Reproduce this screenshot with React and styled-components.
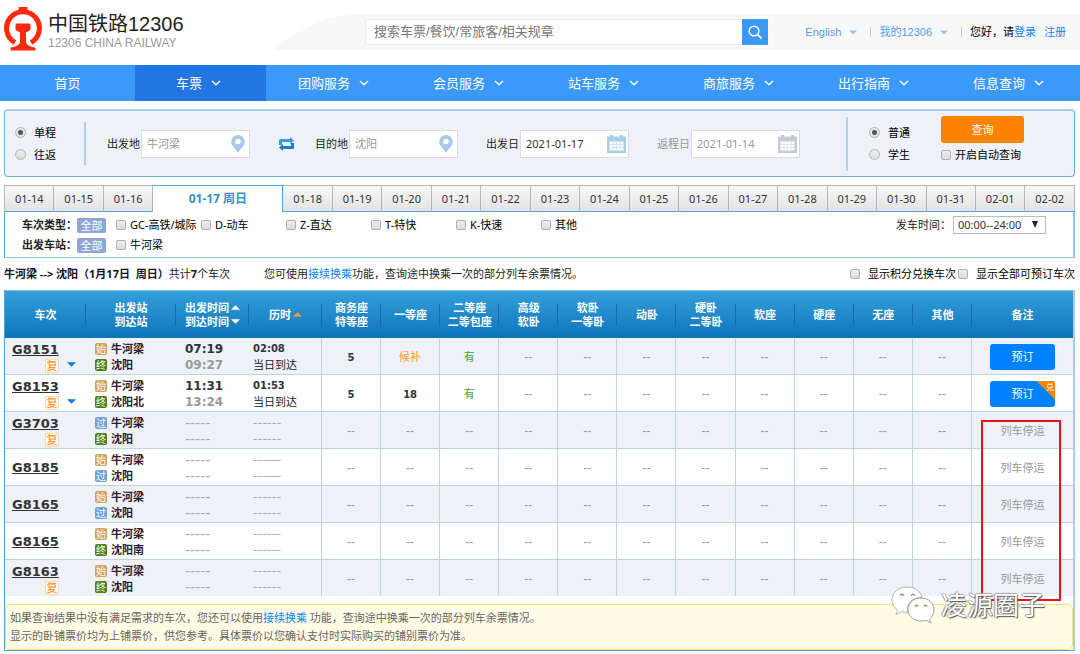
import React from "react";
import styled, { createGlobalStyle, css } from "styled-components";

const navItems = ["首页", "车票", "团购服务", "会员服务", "站车服务", "商旅服务", "出行指南", "信息查询"];

const dates = [
  "01-14", "01-15", "01-16", "01-17 周日", "01-18", "01-19", "01-20", "01-21", "01-22", "01-23",
  "01-24", "01-25", "01-26", "01-27", "01-28", "01-29", "01-30", "01-31", "02-01", "02-02",
];

const trainTypes = ["GC-高铁/城际", "D-动车", "Z-直达", "T-特快", "K-快速", "其他"];

const seatColumns = [
  ["商务座", "特等座"],
  ["一等座"],
  ["二等座", "二等包座"],
  ["高级", "软卧"],
  ["软卧", "一等卧"],
  ["动卧"],
  ["硬卧", "二等卧"],
  ["软座"],
  ["硬座"],
  ["无座"],
  ["其他"],
];

const trains = [
  { no: "G8151", fu: true, more: true, from: ["始", "牛河梁"], to: ["终", "沈阳"], start: "07:19", end: "09:27", time: "02:08", seats: ["5", "候补", "有"] },
  { no: "G8153", fu: true, more: true, from: ["始", "牛河梁"], to: ["终", "沈阳北"], start: "11:31", end: "13:24", time: "01:53", seats: ["5", "18", "有"], points: true },
  { no: "G3703", fu: true, from: ["过", "牛河梁"], to: ["终", "沈阳"] },
  { no: "G8185", from: ["始", "牛河梁"], to: ["过", "沈阳"] },
  { no: "G8165", from: ["始", "牛河梁"], to: ["过", "沈阳"] },
  { no: "G8165", from: ["始", "牛河梁"], to: ["终", "沈阳南"] },
  { no: "G8163", fu: true, from: ["始", "牛河梁"], to: ["终", "沈阳"] },
];

const badgeColors = { 始: "#d3a25c", 终: "#4d8019", 过: "#6c9fdc" };

const LogoMark = () => (
  <svg width="38" height="44" viewBox="0 0 38 44" aria-hidden="true">
    <path d="M14.500 0h9v4h-9z" fill="#ff2a0e" />
    <path d="M11 35.500A16.400 16.400 0 1 1 27 35.500" fill="none" stroke="#ff2a0e" strokeWidth="5" />
    <path
      d="M13 16.500h12q1.500 0 1.500 1.500v4q0 1.500-2 2.200l-2.500 1v9.300q0 3 4 4.800l5.500 1.500v2.700H6.500v-2.700l5.500-1.500q4-1.800 4-4.800v-9.300l-2.500-1q-2-.7-2-2.200v-4q0-1.500 1.500-1.500z"
      fill="#ff2a0e"
    />
  </svg>
);

const Chevron = () => (
  <svg width="10" height="8" viewBox="0 0 10 8" aria-hidden="true">
    <path d="M1 2 5 5.800 9 2" fill="none" stroke="#fff" strokeWidth="1.400" />
  </svg>
);

const Caret = ({ color, up, size = 9 }) => (
  <svg width={size} height="5" viewBox="0 0 10 5" aria-hidden="true">
    <path d={up ? "M0 5 5 0l5 5z" : "M0 0h10L5 5z"} fill={color} />
  </svg>
);

const Pin = () => (
  <svg width="14" height="18" viewBox="0 0 14 18" aria-hidden="true">
    <path d="M7 0a6.800 6.800 0 0 1 6.800 6.800C13.800 11 9 14 7 18 5 14 .2 11 .2 6.800A6.800 6.800 0 0 1 7 0z" fill="#a8cbe8" />
    <circle cx="7" cy="6.500" r="2.800" fill="#fff" />
  </svg>
);

const CalendarIcon = ({ color }) => (
  <svg width="19" height="18" viewBox="0 0 19 18" aria-hidden="true">
    <path d="M3 0h3v1.500h7V0h3v1.500h3V18H0V1.500h3z" fill={color} />
    <path d="M2 6h15v10H2z" fill="#fff" fillOpacity=".45" />
    <path
      d="M3 7h2.500v2H3zm3.500 0H9v2H6.500zM10 7h2.500v2H10zm3.500 0H16v2h-2.500zM3 10h2.500v2H3zm3.500 0H9v2H6.500zm3.500 0h2.500v2H10zm3.500 0H16v2h-2.500zM3 13h2.500v2H3zm3.500 0H9v2H6.500zm3.500 0h2.500v2H10zm3.500 0H16v2h-2.500z"
      fill="#fff"
    />
  </svg>
);

const SwapIcon = () => (
  <svg width="15" height="14" viewBox="0 0 15 14" aria-hidden="true">
    <path d="M0 8V3.500Q0 2 1.500 2H11V0l4 3.500L11 7V5H3v3z" fill="#2f9fe0" />
    <path d="M15 6v4.500q0 1.500-1.500 1.500H4v2L0 10.500 4 7v2h8V6z" fill="#1680c6" />
  </svg>
);

const SearchIcon = () => (
  <svg width="14" height="14" viewBox="0 0 14 14" aria-hidden="true">
    <circle cx="6" cy="6" r="4.800" fill="none" stroke="#fff" strokeWidth="1.500" />
    <path d="m9.500 9.500 4 4" stroke="#fff" strokeWidth="1.700" />
  </svg>
);

const WechatIcon = () => (
  <svg width="44" height="38" viewBox="0 0 44 38" aria-hidden="true">
    <path
      d="M16 1C7 1 1 7 1 14c0 4 2 7.500 5.500 10L5 28.500l6-3c2 .7 4 1 6 .8C15 17 21 11.500 31 11.500 29.500 5 23.500 1 16 1z"
      fill="#fff" stroke="#a5a5a5" strokeWidth=".8"
    />
    <path
      d="M30 12c-8 0-13 5.500-13 11.500S22 35 30 35c1.700 0 3.300-.3 5-.8l5 2.800-1.500-4c3-2.200 4.500-5.500 4.500-9C43 17.500 38 12 30 12z"
      fill="#fff" stroke="#8d8d8d" strokeWidth=".8"
    />
    <path d="M9 9.500q2-2.500 4 0M20 9.500q2-2.500 4 0" fill="none" stroke="#8a9a94" strokeWidth="1.500" />
    <path d="M24 20.500q1.600-2.500 3.200 0M33 20.500q1.600-2.500 3.200 0" fill="none" stroke="#b08a60" strokeWidth="1.500" />
  </svg>
);

const Station = ({ data }) => (
  <StationLine>
    <StationBadge $color={badgeColors[data[0]]}>{data[0]}</StationBadge>
    {data[1]}
  </StationLine>
);

const Seat = ({ value }) => {
  if (!value) return <Empty>--</Empty>;
  if (value === "候补") return <Waiting>{value}</Waiting>;
  if (value === "有") return <Available>{value}</Available>;
  return <Count>{value}</Count>;
};

const TrainRow = ({ train }) => (
  <Row>
    <td>
      <TrainCell>
        <TrainNo href="#">{train.no}</TrainNo>
        {train.fu && (
          <TrainTags>
            <FuBadge>复</FuBadge>
            {train.more && <Caret color="#0a7cf0" />}
          </TrainTags>
        )}
      </TrainCell>
    </td>
    <td>
      <StationCell>
        <Station data={train.from} />
        <Station data={train.to} />
      </StationCell>
    </td>
    <td>
      {train.start ? (
        <TimeCell>
          <StartTime>{train.start}</StartTime>
          <EndTime>{train.end}</EndTime>
        </TimeCell>
      ) : (
        <TimeCell>
          <Dashes $large>-----</Dashes>
          <Dashes $large>-----</Dashes>
        </TimeCell>
      )}
    </td>
    <td>
      {train.time ? (
        <DurationCell>
          <Duration>{train.time}</Duration>
          <span>当日到达</span>
        </DurationCell>
      ) : (
        <DurationCell>
          <Dashes>------</Dashes>
          <Dashes>------</Dashes>
        </DurationCell>
      )}
    </td>
    {seatColumns.map((col, i) => (
      <SeatCell key={i}>
        <Seat value={train.seats && train.seats[i]} />
      </SeatCell>
    ))}
    <SeatCell>
      {train.seats ? (
        <BookButton type="button">
          预订
          {train.points && <PointsCorner>兑</PointsCorner>}
        </BookButton>
      ) : (
        <Stopped>列车停运</Stopped>
      )}
    </SeatCell>
  </Row>
);

const App = () => (
  <>
    <GlobalStyle />
    <Header>
      <Brand>
        <LogoMark />
        <div>
          <BrandName>中国铁路12306</BrandName>
          <BrandSub>12306 CHINA RAILWAY</BrandSub>
        </div>
      </Brand>
      <BandCurve viewBox="0 0 90 36" aria-hidden="true">
        <path d="M0 36v-5C32 16 42 0 90 0v36z" fill="#f8f8f8" />
      </BandCurve>
      <HeaderBand>
        <SiteSearch>
          <SiteSearchInput aria-label="搜索" placeholder="搜索车票/餐饮/常旅客/相关规章" />
          <SiteSearchButton type="button" aria-label="搜索">
            <SearchIcon />
          </SiteSearchButton>
        </SiteSearch>
        <UserLinks>
          <SoftLink href="#">English</SoftLink>
          <Caret color="#8cc8f5" size={8} />
          <Separator />
          <SoftLink href="#">我的12306</SoftLink>
          <Caret color="#8cc8f5" size={8} />
          <Separator />
          <span>
            您好，请<BlueLink href="#">登录</BlueLink>
          </span>
          <BlueLink href="#">注册</BlueLink>
        </UserLinks>
      </HeaderBand>
    </Header>

    <Nav>
      {navItems.map((item, i) => (
        <NavItem key={item} href="#" $active={i === 1}>
          {item}
          {i > 0 && <Chevron />}
        </NavItem>
      ))}
    </Nav>

    <Content>
      <SearchPanel>
        <RadioGroup>
          <Choice><Radio type="radio" name="trip" defaultChecked />单程</Choice>
          <Choice><Radio type="radio" name="trip" />往返</Choice>
        </RadioGroup>
        <Divider $height={43} />
        <Fields>
          <Field>
            出发地
            <InputWrap><TextInput placeholder="牛河梁" /><Pin /></InputWrap>
          </Field>
          <SwapButton type="button" aria-label="交换"><SwapIcon /></SwapButton>
          <Field>
            目的地
            <InputWrap><TextInput placeholder="沈阳" /><Pin /></InputWrap>
          </Field>
        </Fields>
        <DateFields>
          <Field>
            出发日
            <InputWrap><TextInput defaultValue="2021-01-17" /><CalendarIcon color="#a8cdea" /></InputWrap>
          </Field>
          <Field $muted>
            返程日
            <InputWrap><TextInput placeholder="2021-01-14" /><CalendarIcon color="#c3cad8" /></InputWrap>
          </Field>
        </DateFields>
        <SearchActions>
          <Divider $height={54} />
          <RadioGroup>
            <Choice><Radio type="radio" name="passenger" defaultChecked />普通</Choice>
            <Choice><Radio type="radio" name="passenger" />学生</Choice>
          </RadioGroup>
          <QueryBox>
            <QueryButton type="button">查询</QueryButton>
            <Option><Checkbox type="checkbox" />开启自动查询</Option>
          </QueryBox>
        </SearchActions>
      </SearchPanel>

      <DateTabs>
        {dates.map((date) => (
          <DateTab key={date} type="button" $active={date === "01-17 周日"}>
            {date}
          </DateTab>
        ))}
      </DateTabs>

      <FilterPanel>
        <FilterRow>
          <FilterName>车次类型：</FilterName>
          <AllButton type="button">全部</AllButton>
          {trainTypes.map((type) => (
            <FilterOption key={type}><Checkbox type="checkbox" />{type}</FilterOption>
          ))}
          <DepartTime>
            发车时间：
            <SelectWrap>
              <TimeSelect>
                <option>00:00--24:00</option>
              </TimeSelect>
              <svg width="8" height="8" viewBox="0 0 8 8" aria-hidden="true">
                <path d="M1 0h6L4 7z" fill="#222" />
              </svg>
            </SelectWrap>
          </DepartTime>
        </FilterRow>
        <FilterRow>
          <FilterName>出发车站：</FilterName>
          <AllButton type="button">全部</AllButton>
          <FilterOption><Checkbox type="checkbox" />牛河梁</FilterOption>
        </FilterRow>
      </FilterPanel>

      <Summary>
        <SummaryText>
          <strong>牛河梁 --&gt; 沈阳（1月17日&nbsp; 周日）</strong>共计<strong>7</strong>个车次
        </SummaryText>
        <span>
          您可使用<BlueLink href="#">接续换乘</BlueLink>功能，查询途中换乘一次的部分列车余票情况。
        </span>
        <SummaryOptions>
          <WideOption><Checkbox type="checkbox" />显示积分兑换车次</WideOption>
          <WideOption><Checkbox type="checkbox" />显示全部可预订车次</WideOption>
        </SummaryOptions>
      </Summary>

      <Results>
        <Table>
          <colgroup>
            <Col $width={81} />
            <Col $width={90} />
            <Col $width={73} />
            <Col $width={73} />
            {seatColumns.map((col, i) => <col key={i} />)}
            <Col $width={101} />
          </colgroup>
          <TableHead>
            <tr>
              <HeadCell>车次</HeadCell>
              <HeadCell>出发站<br />到达站</HeadCell>
              <HeadCell>
                <SortLine>出发时间<Caret color="#fff" up /></SortLine>
                <SortLine>到达时间<Caret color="#fff" /></SortLine>
              </HeadCell>
              <HeadCell>
                <SortLine>历时<Caret color="#f79a3c" up /></SortLine>
              </HeadCell>
              {seatColumns.map((lines) => (
                <HeadCell key={lines.join()}>
                  {lines[0]}
                  {lines[1] && <br />}
                  {lines[1]}
                </HeadCell>
              ))}
              <HeadCell>备注</HeadCell>
            </tr>
          </TableHead>
          <tbody>
            {trains.map((train, i) => <TrainRow key={i} train={train} />)}
          </tbody>
        </Table>
        <Notice>
          <p>如果查询结果中没有满足需求的车次，您还可以使用<BlueLink href="#">接续换乘</BlueLink> 功能，查询途中换乘一次的部分列车余票情况。</p>
          <p>显示的卧铺票价均为上铺票价，供您参考。具体票价以您确认支付时实际购买的铺别票价为准。</p>
        </Notice>
        <RedMark />
        <Watermark>
          <WechatIcon />
          凌源圈子
        </Watermark>
      </Results>
    </Content>
  </>
);

const GlobalStyle = createGlobalStyle`
  * {
    box-sizing: border-box;
  }
  body {
    margin: 0;
    background: #fff;
    color: #222;
    font: 11px/16px "Noto Sans", "Noto Sans CJK SC", sans-serif;
    white-space: nowrap;
  }
  input, button, select {
    font: inherit;
    margin: 0;
  }
  button {
    border: 0;
    padding: 0;
  }
  a {
    text-decoration: none;
  }
  p {
    margin: 0;
  }
  svg {
    flex-shrink: 0;
  }
`;

const Header = styled.header`
  display: flex;
  height: 65px;
  padding-top: 7px;
`;
const Brand = styled.div`
  display: flex;
  gap: 6px;
  width: 275px;
  padding-left: 4px;
`;
const BrandName = styled.div`
  margin-top: 4px;
  font: 20px/26px "Liberation Sans", "Noto Sans CJK SC", sans-serif;
  color: #222;
`;
const BrandSub = styled.div`
  font: 12px/12px "Liberation Sans", sans-serif;
  color: #999;
`;
const BandCurve = styled.svg`
  width: 90px;
  height: 36px;
  margin-top: 7px;
`;
const HeaderBand = styled.div`
  display: flex;
  flex: 1;
  align-items: center;
  height: 36px;
  margin-top: 7px;
  background: #f8f8f8;
`;
const SiteSearch = styled.div`
  display: flex;
  flex: 1;
  height: 26px;
`;
const SiteSearchInput = styled.input`
  flex: 1;
  min-width: 0;
  border: 1px solid #eee;
  border-right: 0;
  padding: 0 8px;
  font: 13px/24px "Liberation Sans", "Noto Sans CJK SC", sans-serif;
  &::placeholder {
    color: #777;
  }
`;
const SiteSearchButton = styled.button`
  display: grid;
  place-items: center;
  width: 26px;
  background: #3b99fc;
`;
const UserLinks = styled.div`
  display: flex;
  align-items: center;
  gap: 8px;
  padding: 0 14px 0 37px;
  font-family: "Liberation Sans", "Noto Sans CJK SC", sans-serif;
  color: #000;
`;
const SoftLink = styled.a`
  color: #569bf5;
`;
const BlueLink = styled.a`
  color: #0a84ff;
`;
const Separator = styled.span`
  width: 1px;
  height: 10px;
  margin-left: 5px;
  background: #a9d3f7;
`;

const Nav = styled.nav`
  display: flex;
  height: 36px;
  background: #3b99fc;
`;
const NavItem = styled.a`
  display: flex;
  flex: 1;
  align-items: center;
  justify-content: center;
  gap: 9px;
  margin-right: 4px;
  padding-right: 4px;
  color: #fff;
  font-size: 13px;
  background: ${(props) => (props.$active ? "#2176e3" : "none")};
  &:first-child {
    padding: 0 0 0 4px;
  }
`;

const Content = styled.main`
  padding: 8px 5px 4px 4px;
`;
const SearchPanel = styled.form`
  display: flex;
  align-items: center;
  height: 68px;
  padding: 0 50px 0 10px;
  border: 1px solid #6db2e2;
  border-top: 2px solid #a5cdec;
  border-radius: 4px;
  background: #eef1f8;
`;
const RadioGroup = styled.div`
  display: grid;
  gap: 6px;
`;
const Choice = styled.label`
  display: flex;
  align-items: center;
  gap: 8px;
  color: #000;
`;
const Radio = styled.input`
  appearance: none;
  width: 11px;
  height: 11px;
  border: 1px solid #b4b4b4;
  border-radius: 50%;
  background: linear-gradient(#eee, #ddd);
  &:checked {
    background: radial-gradient(#555 0 2px, #e6e6e6 3px);
  }
`;
const Checkbox = styled.input`
  appearance: none;
  flex-shrink: 0;
  width: 10px;
  height: 10px;
  border: 1px solid #b0b0b0;
  border-radius: 2px;
  background: linear-gradient(#eee, #dcdcdc);
  &:checked {
    background: #3b99fc;
  }
`;
const Divider = styled.span`
  width: 2px;
  height: ${(props) => props.$height}px;
  margin: 0 21px 0 28px;
  background: #a9d3ed;
`;
const Fields = styled.div`
  display: flex;
  align-items: center;
`;
const DateFields = styled(Fields)`
  gap: 28px;
  margin-left: 28px;
`;
const Field = styled.label`
  display: flex;
  align-items: center;
  gap: 1px;
  color: ${(props) => (props.$muted ? "#999" : "#222")};
`;
const InputWrap = styled.span`
  position: relative;
  svg {
    position: absolute;
    top: 5px;
    right: 3px;
  }
  svg[width="14"] {
    right: 5px;
  }
`;
const TextInput = styled.input`
  display: block;
  width: 109px;
  height: 28px;
  padding: 0 5px;
  border: 1px solid #ddd;
  background: #fff;
  color: #333;
  &::placeholder {
    color: #999;
  }
`;
const SwapButton = styled.button`
  display: grid;
  margin: 0 21px 0 29px;
  background: none;
`;
const SearchActions = styled.div`
  display: flex;
  align-items: center;
  margin-left: auto;
  ${Divider} {
    margin-left: 0;
  }
`;
const QueryBox = styled.div`
  display: grid;
  gap: 4px;
  margin: 0 0 8px 31px;
`;
const QueryButton = styled.button`
  width: 83px;
  height: 27px;
  border-radius: 3px;
  background: #ff8201;
  color: #fff;
`;
const Option = styled.label`
  display: flex;
  align-items: center;
  gap: 4px;
  color: #000;
`;

const DateTabs = styled.div`
  display: flex;
  height: 27px;
  margin-top: 8px;
  border-left: 1px solid #b5b5b5;
`;
const DateTab = styled.button`
  flex: 1;
  border: solid #b5b5b5;
  border-width: 1px 1px 0 0;
  border-bottom: 1px solid #4fa3da;
  background: linear-gradient(#f7f7f7, #e3e3e3);
  color: #333;
  ${(props) =>
    props.$active &&
    css`
      flex: 0 0 130px;
      border: solid #4fa3da;
      border-width: 1px 1px 0 0;
      background: #fff;
      color: #3490d2;
      font-size: 12px;
      font-weight: bold;
    `}
`;

const FilterPanel = styled.div`
  display: grid;
  gap: 4px;
  height: 46px;
  padding: 5px 27px 5px 17px;
  border: solid #8dc4ea;
  border-width: 0 2px 1px 1px;
  border-left-color: #4fa3da;
`;
const FilterRow = styled.div`
  display: flex;
  align-items: center;
  height: 16px;
`;
const FilterName = styled.strong`
  width: 55px;
`;
const AllButton = styled.button`
  width: 29px;
  height: 15px;
  margin-right: 10px;
  border-radius: 2px;
  background: #8fa5d6;
  color: #fff;
  line-height: 15px;
`;
const FilterOption = styled(Option)`
  width: 85px;
`;
const DepartTime = styled.label`
  display: flex;
  align-items: center;
  gap: 2px;
  margin-left: auto;
`;
const SelectWrap = styled.span`
  position: relative;
  svg {
    position: absolute;
    top: 5px;
    right: 7px;
    pointer-events: none;
  }
`;
const TimeSelect = styled.select`
  appearance: none;
  display: block;
  width: 93px;
  height: 18px;
  padding: 0 4px;
  border: 1px solid #bbb;
  background: #fff;
  color: #333;
  line-height: 16px;
`;

const Summary = styled.div`
  display: flex;
  align-items: center;
  height: 32px;
`;
const SummaryText = styled.span`
  width: 260px;
  strong {
    color: #101028;
  }
`;
const SummaryOptions = styled.div`
  display: flex;
  gap: 2px;
  margin-left: auto;
`;
const WideOption = styled(Option)`
  gap: 8px;
`;

const Results = styled.section`
  position: relative;
  border: solid #4fa3da;
  border-width: 0 0 1px 1px;
  border-right: 2px solid #a8cdee;
`;
const Table = styled.table`
  width: 100%;
  table-layout: fixed;
  border-collapse: separate;
  border-spacing: 0;
`;
const Col = styled.col`
  width: ${(props) => props.$width}px;
`;
const TableHead = styled.thead`
  background: linear-gradient(#35a0dc, #0f75bb);
`;
const HeadCell = styled.th`
  height: 48px;
  padding: 0;
  border-top: 1px solid #8cc5e8;
  color: #fff;
  font-weight: bold;
  line-height: 14px;
  &:not(:last-child) {
    background: linear-gradient(#1668ad, #1668ad) right center / 1px 22px no-repeat;
  }
`;
const SortLine = styled.div`
  display: flex;
  align-items: center;
  justify-content: center;
  gap: 2px;
`;
const SeatCell = styled.td`
  text-align: center;
`;
const Row = styled.tr`
  td {
    height: 37px;
    padding: 2px 0 0;
    border-bottom: 1px solid #b9d6e6;
  }
  td:nth-child(n + 4):not(:last-child) {
    border-right: 1px solid #b9d6e6;
  }
  &:nth-child(odd) {
    background: #eef1f8;
  }
  &:last-child td {
    height: 36px;
    border-bottom: 0;
  }
`;
const TrainCell = styled.div`
  padding-left: 7px;
`;
const TrainNo = styled.a`
  display: block;
  color: #333;
  font: bold 13px/18px "DejaVu Sans", sans-serif;
  text-decoration: underline;
`;
const TrainTags = styled.div`
  display: flex;
  gap: 8px;
  padding-left: 33px;
`;
const FuBadge = styled.span`
  width: 14px;
  height: 14px;
  border: 1px solid #fbdcae;
  background: #fff9ef;
  color: #f88a13;
  line-height: 12px;
  text-align: center;
  & + svg {
    margin-top: 3px;
  }
`;
const StationCell = styled.div`
  padding-left: 9px;
`;
const StationLine = styled.div`
  display: flex;
  align-items: center;
  gap: 4px;
  color: #2b1b33;
  font-weight: bold;
`;
const StationBadge = styled.span`
  width: 12px;
  height: 12px;
  border-radius: 2px;
  background: ${(props) => props.$color};
  color: #fff;
  font-size: 10px;
  font-weight: normal;
  line-height: 12px;
  text-align: center;
`;
const TimeCell = styled.div`
  display: grid;
  padding-left: 9px;
`;
const StartTime = styled.span`
  color: #333;
  font: bold 12px/16px "DejaVu Sans", sans-serif;
`;
const EndTime = styled(StartTime)`
  color: #999;
`;
const DurationCell = styled.div`
  display: grid;
  padding-left: 4px;
`;
const Duration = styled.span`
  color: #333;
  font: bold 10px/16px "DejaVu Sans", sans-serif;
`;
const Dashes = styled.span`
  color: #aaa;
  font: ${(props) => (props.$large ? 14 : 13)}px/16px "DejaVu Sans", sans-serif;
`;
const Empty = styled.span`
  color: #999;
  font: 12px/16px "Liberation Sans", sans-serif;
`;
const Waiting = styled.span`
  color: #ff9a2e;
`;
const Available = styled.span`
  color: #45a22d;
`;
const Count = styled.span`
  color: #333;
  font: bold 10px/16px "DejaVu Sans", sans-serif;
`;
const Stopped = styled.span`
  color: #999;
`;
const BookButton = styled.button`
  position: relative;
  overflow: hidden;
  width: 65px;
  height: 26px;
  border-radius: 3px;
  background: #0081ff;
  color: #fff;
  vertical-align: middle;
`;
const PointsCorner = styled.span`
  position: absolute;
  top: 0;
  right: 0;
  width: 19px;
  height: 19px;
  padding-right: 1px;
  background: linear-gradient(45deg, transparent 50%, #ff8201 50%);
  font-size: 8px;
  line-height: 11px;
  text-align: right;
`;
const Notice = styled.div`
  margin-top: 8px;
  padding: 4px;
  border: 1px solid #fbe36b;
  border-radius: 5px;
  background: #fffbe5;
  color: #666;
  line-height: 18px;
`;
const RedMark = styled.div`
  position: absolute;
  top: 130px;
  right: 12px;
  width: 80px;
  height: 181px;
  border: 2px solid #ee0f17;
`;
const Watermark = styled.div`
  position: absolute;
  right: 28px;
  bottom: 26px;
  display: flex;
  align-items: center;
  gap: 6px;
  color: #fff;
  font-size: 26px;
  line-height: 38px;
  text-shadow: 1px 1px 1px #555, -1px 0 1px #999, 0 -1px 1px #aaa;
`;

export default App;
